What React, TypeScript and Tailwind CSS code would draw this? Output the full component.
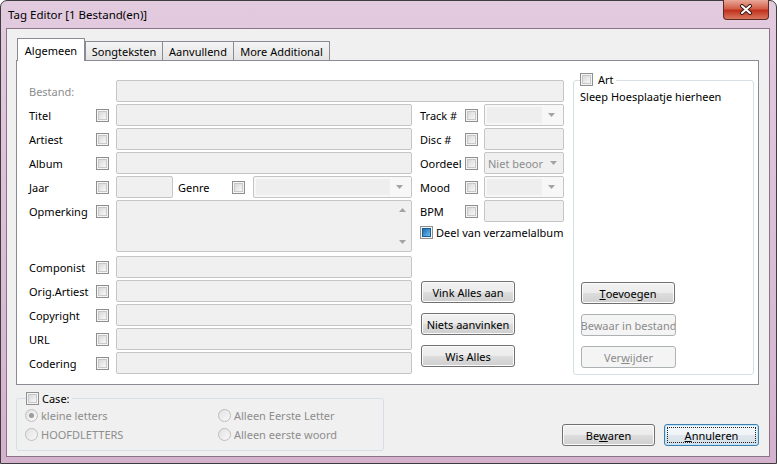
import React from "react";

const Arrow = ({ up = false }: { up?: boolean }) => (
  <svg width="7" height="4" viewBox="0 0 7 4" className="shrink-0">
    <path d={up ? "M0 4 L3.5 0 L7 4 Z" : "M0 0 L7 0 L3.5 4 Z"} fill="#a3a3a3" />
  </svg>
);

function Check({ blue = false }: { blue?: boolean }) {
  return (
    <div className="h-[13px] w-[13px] shrink-0 border border-[#8e8f8f] bg-[#f4f4f4] p-[1px]">
      <div
        className={
          blue
            ? "h-full w-full border border-[#1d5d95] bg-linear-to-br from-[#1e6bb0] to-[#6cc0ee]"
            : "h-full w-full border border-[#c8c8c8] bg-linear-to-br from-[#d8d8d8] to-[#f8f8f8]"
        }
      />
    </div>
  );
}

function Radio({ on = false }: { on?: boolean }) {
  return (
    <div className="flex h-[13px] w-[13px] shrink-0 items-center justify-center rounded-full border border-[#bdbdbd] bg-linear-to-br from-[#e2e2e2] to-[#f9f9f9]">
      {on && <div className="h-[5px] w-[5px] rounded-full bg-[#9c9c9c]" />}
    </div>
  );
}

function Field({ className = "" }: { className?: string }) {
  return <div className={`h-[22px] shrink-0 rounded-[2px] border border-[#c5c5c5] bg-[#f0f0f0] ${className}`} />;
}

function EditCombo({ className = "" }: { className?: string }) {
  return (
    <div className={`flex h-[22px] shrink-0 items-center rounded-[2px] border border-[#c5c5c5] bg-[#f7f7f7] p-[2px] ${className}`}>
      <div className="h-full flex-1 bg-[#eeeeee]" />
      <div className="flex w-[19px] justify-center">
        <Arrow />
      </div>
    </div>
  );
}

function Btn({
  children,
  disabled = false,
  focus = false,
  className = "",
}: {
  children: React.ReactNode;
  disabled?: boolean;
  focus?: boolean;
  className?: string;
}) {
  let look =
    "border-[#707070] bg-[linear-gradient(#f2f2f2,#ebebeb_50%,#dddddd_50%,#cfcfcf)] shadow-[inset_0_0_0_1px_#fbfbfb]";
  if (disabled) look = "border-[#adb2b5] bg-[#f4f4f4] text-[#8b8b8b]";
  if (focus)
    look =
      "border-[#3c7fb1] bg-[linear-gradient(#f4f8fb,#eef3f7_50%,#e0e7ee_50%,#d6dfe7)] shadow-[inset_0_0_0_1px_#bfe3f8]";
  return (
    <div
      className={`relative flex h-[22px] shrink-0 items-center justify-center overflow-hidden whitespace-nowrap rounded-[3px] border ${look} ${className}`}
    >
      {focus && <div className="absolute inset-[2px] border border-dotted border-[#222]" />}
      {children}
    </div>
  );
}

function Row({ label, children }: { label: string; children: React.ReactNode }) {
  return (
    <div className="flex h-[22px] items-center">
      <div className="w-[67px] shrink-0">{label}</div>
      <Check />
      <div className="ml-[7px] flex items-center">{children}</div>
    </div>
  );
}

function SideRow({ label, children }: { label: string; children: React.ReactNode }) {
  return (
    <div className="flex h-[22px] items-center">
      <div className="w-[45px] shrink-0">{label}</div>
      <Check />
      <div className="ml-[6px] flex items-center">{children}</div>
    </div>
  );
}

const tabs = [
  { label: "Songteksten", w: "w-[77px]" },
  { label: "Aanvullend", w: "w-[71px]" },
  { label: "More Additional", w: "w-[97px] border-r" },
];

export default function App() {
  return (
    <div className="h-[464px] w-[777px] overflow-hidden bg-white font-['Noto_Sans',sans-serif] text-[11px] leading-[15px] text-black">
      <div className="flex h-full w-full flex-col rounded-t-[7px] border border-[#3d3d3d] bg-linear-to-b from-[#e3cbdf] to-[#d4b2ce]">
        {/* title bar */}
        <div className="flex h-[27px] items-start justify-between pl-[7px] pr-[7px]">
          <div className="pt-[6px] text-[11.5px]">Tag Editor [1 Bestand(en)]</div>
          <div className="-mt-px flex h-[20px] w-[46px] items-center justify-center rounded-b-[4px] border border-t-0 border-[#5b2b22] bg-[linear-gradient(#e9a898,#d4604a_45%,#c1321d_55%,#d9775f)]">
            <svg width="14" height="11" viewBox="0 0 14 11">
              <path d="M3 2 L11 9 M11 2 L3 9" stroke="#3a1a15" strokeWidth="4" strokeLinecap="round" />
              <path d="M3 2 L11 9 M11 2 L3 9" stroke="#ffffff" strokeWidth="2" strokeLinecap="round" />
            </svg>
          </div>
        </div>

        {/* client */}
        <div className="mb-[6px] ml-[5px] mr-[6px] flex-1 border border-[#8a7386] bg-[#f0f0f0] pl-[9px] pr-[10px] pt-[9px]">
          <div className="ml-[1px] flex h-[22px] items-end">
            <div className="relative z-10 -mb-px flex h-[23px] w-[68px] justify-center border border-b-0 border-[#898c95] bg-white pt-[4px]">
              Algemeen
            </div>
            {tabs.map((t) => (
              <div
                key={t.label}
                className={`flex h-[19px] justify-center border-t border-l border-[#898c95] bg-linear-to-b from-[#f4f4f4] to-[#e4e4e4] pt-[2px] ${t.w}`}
              >
                {t.label}
              </div>
            ))}
          </div>

          {/* tab page */}
          <div className="flex h-[325px] w-[743px] border border-[#898c95] bg-white pl-[12px] pt-[19px]">
            <div className="flex w-[535px] flex-col">
              <div className="flex h-[22px] items-center">
                <div className="w-[87px] shrink-0 text-[#8d8d8d]">Bestand:</div>
                <Field className="w-[448px]" />
              </div>

              <div className="mt-[2px] flex">
                <div className="flex w-[383px] flex-col gap-[2px]">
                  <Row label="Titel">
                    <Field className="w-[296px]" />
                  </Row>
                  <Row label="Artiest">
                    <Field className="w-[296px]" />
                  </Row>
                  <Row label="Album">
                    <Field className="w-[296px]" />
                  </Row>
                  <Row label="Jaar">
                    <Field className="w-[57px]" />
                    <div className="ml-[5px] w-[54px]">Genre</div>
                    <Check />
                    <EditCombo className="ml-[8px] w-[159px]" />
                  </Row>
                  <div className="flex items-start">
                    <div className="flex h-[22px] w-[67px] shrink-0 items-center">Opmerking</div>
                    <div className="flex h-[22px] items-center">
                      <Check />
                    </div>
                    <div className="ml-[7px] flex h-[52px] w-[296px] rounded-[2px] border border-[#c5c5c5] bg-[#f0f0f0]">
                      <div className="flex-1" />
                      <div className="flex w-[17px] flex-col items-center justify-between py-[7px]">
                        <Arrow up />
                        <Arrow />
                      </div>
                    </div>
                  </div>
                </div>

                <div className="ml-[8px] flex w-[144px] flex-col gap-[2px]">
                  <SideRow label="Track #">
                    <EditCombo className="w-[80px]" />
                  </SideRow>
                  <SideRow label="Disc #">
                    <Field className="w-[80px]" />
                  </SideRow>
                  <SideRow label="Oordeel">
                    <div className="flex h-[22px] w-[80px] items-center rounded-[2px] border border-[#c5c5c5] bg-[#f0f0f0] pl-[3px] pr-[6px]">
                      <div className="flex-1 text-[#8d8d8d]">Niet beoor</div>
                      <Arrow />
                    </div>
                  </SideRow>
                  <SideRow label="Mood">
                    <EditCombo className="w-[80px]" />
                  </SideRow>
                  <SideRow label="BPM">
                    <Field className="w-[80px]" />
                  </SideRow>
                  <div className="flex h-[17px] items-center gap-[3px]">
                    <Check blue />
                    <div className="whitespace-nowrap">Deel van verzamelalbum</div>
                  </div>
                </div>
              </div>

              <div className="mt-[4px] flex">
                <div className="flex w-[383px] flex-col gap-[2px]">
                  {["Componist", "Orig.Artiest", "Copyright", "URL", "Codering"].map((l) => (
                    <Row key={l} label={l}>
                      <Field className="w-[296px]" />
                    </Row>
                  ))}
                </div>
                <div className="ml-[9px] flex flex-col gap-[10px] pt-[25px]">
                  <Btn className="w-[94px]">Vink Alles aan</Btn>
                  <Btn className="w-[94px]">Niets aanvinken</Btn>
                  <Btn className="w-[94px]">Wis Alles</Btn>
                </div>
              </div>
            </div>

            {/* Art group */}
            <div className="relative ml-[9px] h-[295px] w-[181px] rounded-[3px] border border-[#d5dfe5] pl-[6px] pt-[8px]">
              <div className="absolute -top-[9px] left-[6px] flex items-center gap-[5px] bg-white pr-[2px]">
                <Check />
                <span>Art</span>
              </div>
              <div>Sleep Hoesplaatje hierheen</div>
              <div className="ml-[1px] mt-[178px] flex flex-col gap-[10px]">
                <Btn className="w-[94px]">
                  <u>T</u>oevoegen
                </Btn>
                <Btn disabled className="w-[95px]">
                  Bewaar in bestand
                </Btn>
                <Btn disabled className="w-[95px]">
                  Ver<u>w</u>ijder
                </Btn>
              </div>
            </div>
          </div>

          {/* bottom */}
          <div className="mt-[13px] flex">
            <div className="relative h-[53px] w-[368px] rounded-[3px] border border-[#d5dfe5] pl-[8px] pt-[7px] text-[#8d8d8d]">
              <div className="absolute -top-[8px] left-[9px] flex items-center gap-[3px] bg-[#f0f0f0] pr-[2px] text-black">
                <Check />
                <span>Case:</span>
              </div>
              <div className="grid grid-cols-[193px_1fr]">
                <div className="flex h-[19px] items-center gap-[3px]">
                  <Radio on />
                  <span>kleine letters</span>
                </div>
                <div className="flex h-[19px] items-center gap-[3px]">
                  <Radio />
                  <span>Alleen Eerste Letter</span>
                </div>
                <div className="flex h-[19px] items-center gap-[3px]">
                  <Radio />
                  <span>HOOFDLETTERS</span>
                </div>
                <div className="flex h-[19px] items-center gap-[3px]">
                  <Radio />
                  <span>Alleen eerste woord</span>
                </div>
              </div>
            </div>
            <div className="ml-auto mt-[26px] flex gap-[9px]">
              <Btn className="w-[93px]">
                Be<u>w</u>aren
              </Btn>
              <Btn focus className="w-[95px]">
                <u>A</u>nnuleren
              </Btn>
            </div>
          </div>
        </div>
      </div>
    </div>
  );
}
